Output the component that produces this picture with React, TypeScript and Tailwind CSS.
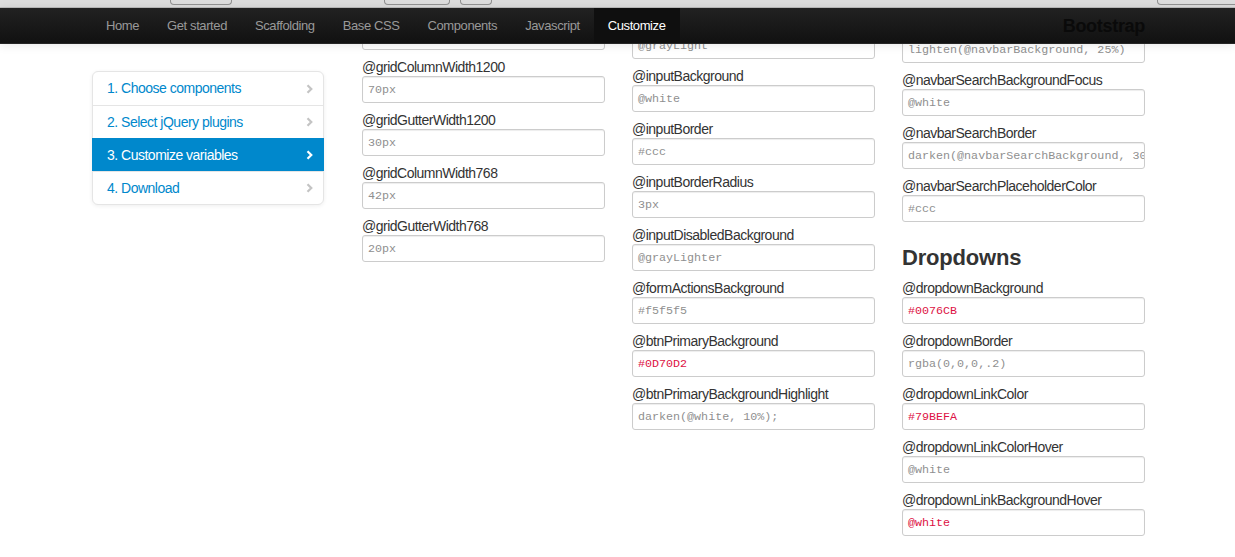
const navItems = ["Home", "Get started", "Scaffolding", "Base CSS", "Components", "Javascript", "Customize"];

const steps = ["1. Choose components", "2. Select jQuery plugins", "3. Customize variables", "4. Download"];

type Field = { label?: string; value: string; hot?: boolean };

const col1: Field[] = [
  { value: "" },
  { label: "@gridColumnWidth1200", value: "70px" },
  { label: "@gridGutterWidth1200", value: "30px" },
  { label: "@gridColumnWidth768", value: "42px" },
  { label: "@gridGutterWidth768", value: "20px" },
];

const col2: Field[] = [
  { value: "@grayLight" },
  { label: "@inputBackground", value: "@white" },
  { label: "@inputBorder", value: "#ccc" },
  { label: "@inputBorderRadius", value: "3px" },
  { label: "@inputDisabledBackground", value: "@grayLighter" },
  { label: "@formActionsBackground", value: "#f5f5f5" },
  { label: "@btnPrimaryBackground", value: "#0D70D2", hot: true },
  { label: "@btnPrimaryBackgroundHighlight", value: "darken(@white, 10%);" },
];

const col3a: Field[] = [
  { value: "lighten(@navbarBackground, 25%)" },
  { label: "@navbarSearchBackgroundFocus", value: "@white" },
  { label: "@navbarSearchBorder", value: "darken(@navbarSearchBackground, 30%)" },
  { label: "@navbarSearchPlaceholderColor", value: "#ccc" },
];

const col3b: Field[] = [
  { label: "@dropdownBackground", value: "#0076CB", hot: true },
  { label: "@dropdownBorder", value: "rgba(0,0,0,.2)" },
  { label: "@dropdownLinkColor", value: "#79BEFA", hot: true },
  { label: "@dropdownLinkColorHover", value: "@white" },
  { label: "@dropdownLinkBackgroundHover", value: "@white", hot: true },
];

function Chevron({ active }: { active: boolean }) {
  return (
    <svg width="7" height="10" viewBox="0 0 7 10" className={active ? "text-white" : "text-[#c4c4c4]"}>
      <path d="M1.5 1.2 L5.3 5 L1.5 8.8" fill="none" stroke="currentColor" strokeWidth="2.2" />
    </svg>
  );
}

function VarField({ f }: { f: Field }) {
  return (
    <div>
      {f.label && (
        <label className="block h-[18px] text-[14px] leading-[18px] tracking-[-0.5px] text-[#333]">{f.label}</label>
      )}
      <div
        className={`mb-[8px] flex h-[27px] items-center overflow-hidden whitespace-nowrap rounded-[3px] border border-[#cccccc] bg-white pl-[5px] pt-[2px] font-['Liberation_Mono','Courier_New',monospace] text-[11.7px] shadow-[inset_0_1px_1px_rgba(0,0,0,0.075)] ${
          f.hot ? "text-[#dd1144]" : "text-[#8f8f8f]"
        }`}
      >
        {f.value}
      </div>
    </div>
  );
}

export default function App() {
  return (
    <div className="relative h-[557px] overflow-hidden bg-white font-['Liberation_Sans',Arial,sans-serif]">
      <div className="flex items-start pl-[92px]">
        <ul className="mt-[71px] w-[232px] rounded-[6px] border border-[#e5e5e5] bg-white shadow-[0_1px_4px_rgba(0,0,0,0.065)]">
          {steps.map((s, i) => {
            const active = i === 2;
            return (
              <li
                key={s}
                className={`flex h-[33px] items-center justify-between text-[14px] tracking-[-0.5px] ${
                  i > 0 ? "border-t" : ""
                } ${
                  active
                    ? "-mx-px border-[#0088cc] bg-[#0088cc] pl-[15px] pr-[11px] text-white"
                    : "border-[#e5e5e5] pl-[14px] pr-[10px] text-[#0088cc]"
                }`}
              >
                <span>{s}</span>
                <Chevron active={active} />
              </li>
            );
          })}
        </ul>

        <div className="ml-[38px] w-[243px] pt-[23px]">
          {col1.map((f, i) => (
            <VarField key={i} f={f} />
          ))}
        </div>

        <div className="ml-[27px] w-[243px] pt-[32px]">
          {col2.map((f, i) => (
            <VarField key={i} f={f} />
          ))}
        </div>

        <div className="ml-[27px] w-[243px] pt-[36px]">
          {col3a.map((f, i) => (
            <VarField key={i} f={f} />
          ))}
          <h3 className="mb-[6px] mt-[21px] text-[22px] font-bold leading-[30px] tracking-[-0.2px] text-[#333]">Dropdowns</h3>
          {col3b.map((f, i) => (
            <VarField key={i} f={f} />
          ))}
        </div>
      </div>

      <header className="absolute inset-x-0 top-0">
        <div className="flex h-[8px] overflow-hidden border-b border-[#bcbcbc] bg-[#dddddd]">
          <div className="ml-[170px] h-[5px] w-[62px] shrink-0 rounded-b-[4px] border border-t-0 border-[#8f8f8f]" />
          <div className="ml-[152px] h-[5px] w-[66px] shrink-0 rounded-b-[4px] border border-t-0 border-[#8f8f8f]" />
          <div className="ml-[10px] h-[5px] w-[32px] shrink-0 rounded-b-[4px] border border-t-0 border-[#8f8f8f]" />
          <div className="ml-[665px] h-[5px] w-[100px] shrink-0 rounded-b-[4px] border border-t-0 border-[#8f8f8f]" />
        </div>
        <nav className="flex h-[36px] items-stretch border-b border-[#252525] bg-linear-to-b from-[#222222] to-[#111111] pl-[92px] pr-[90px] shadow-[0_1px_10px_rgba(0,0,0,0.1)]">
          {navItems.map((n) => (
            <a
              key={n}
              className={`flex items-center px-[14px] pt-px text-[13px] tracking-[-0.4px] ${
                n === "Customize" ? "bg-[#0f0f0f] text-white" : "text-[#999]"
              }`}
            >
              {n}
            </a>
          ))}
          <span className="ml-auto flex items-center pt-px text-[18px] font-bold tracking-[-0.3px] text-[#0a0a0a]">Bootstrap</span>
        </nav>
      </header>
    </div>
  );
}
